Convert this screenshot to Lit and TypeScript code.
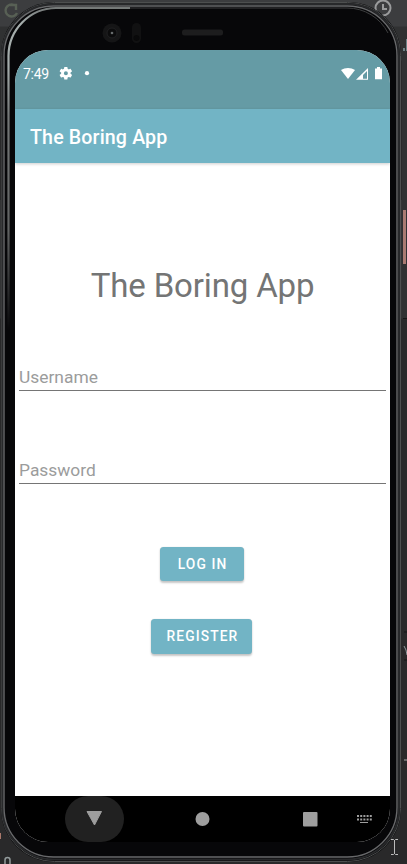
import { LitElement, html, css, svg } from "lit";
import { customElement, property } from "lit/decorators.js";

@customElement("raised-button")
class RaisedButton extends LitElement {
  @property() label = "";
  static styles = css`
    :host { display: block; }
    button {
      display: block; width: 100%; height: 100%; padding: 0 0 0 2px; border: 0; border-radius: 3.5px;
      background: #72b4c5; color: #fff; font: 500 13.8px/35px Roboto, sans-serif; white-space: nowrap;
      letter-spacing: 1.1px; box-shadow: 0 1.5px 2px rgba(0,0,0,.22), 0 0 1px rgba(0,0,0,.12);
    }
  `;
  render() { return html`<button>${this.label}</button>`; }
}

@customElement("app-root")
class AppRoot extends LitElement {
  static styles = css`
    :host {
      display: block; position: relative; width: 407px; height: 864px; overflow: hidden;
      background: linear-gradient(#3c3d3f 0 26px, #303132 27px 60px, #29292a 61px 200px, #333435 200px 318px, #29292a 319px);
      font-family: Roboto, sans-serif; box-sizing: border-box; padding: 2px 0 0 1px;
    }
    .deco { position: absolute; left: 0; top: 0; }
    .phone {
      position: relative; box-sizing: border-box; width: 400px; height: 860px; padding: 48px 0 0 14px;
      border-radius: 53px; background: #070709;
    }
    .screen {
      width: 375px; height: 792px; border-radius: 33px; overflow: hidden; background: #fff;
      display: flex; flex-direction: column;
    }
    .status {
      height: 59px; flex: none; background: #659ba5; color: #fff; box-sizing: border-box;
      padding: 16px 7px 0 8px; display: flex; align-items: flex-start;
    }
    .time { font-size: 14px; line-height: 17px; letter-spacing: -.3px; width: 36px; }
    .grow { flex: 1; }
    .bar {
      height: 54px; flex: none; background: #72b4c5; color: #fff; padding-left: 15px;
      font-weight: 500; font-size: 19.6px; line-height: 57px; letter-spacing: .15px;
      box-shadow: 0 1px 3px rgba(0,0,0,.2);
    }
    .content { flex: 1; display: flex; flex-direction: column; align-items: center; min-height: 0; }
    h1 { margin: 102px 0 0; font-weight: 400; font-size: 33px; letter-spacing: -.15px; line-height: 42px; height: 42px; color: #747575; white-space: nowrap; }
    .field {
      width: 367px; height: 28px; box-sizing: border-box; border-bottom: 1px solid #757575;
      font-size: 17.4px; line-height: 28px; color: #9b9c9c;
    }
    .user { margin-top: 56px; }
    .pass { margin-top: 65px; }
    .login { width: 84px; height: 34px; margin: 63px 2px 0 0; }
    .register { width: 101px; height: 35px; margin: 38px 2px 0 0; }
    .nav { height: 46px; flex: none; background: #000; }
    svg { display: block; flex: none; }
  `;

  render() {
    const keys = [0, 1, 2, 3, 4].map(i => svg`<path d="M${342 + i * 3.2} 19h2v2h-2zM${342 + i * 3.2} 22.5h2v2h-2z"/>`);
    return html`
      <svg class="deco" width="407" height="864" fill="none">
        <path d="M14 5A6 6 0 1 0 17 13M10 5h6v5" stroke="#586055" stroke-width="2.4"/>
        <circle cx="383" cy="8" r="7.5" stroke="#9a9b9c" stroke-width="2"/>
        <path d="M383 4v5h4" stroke="#9a9b9c" stroke-width="2"/>
        <path d="M404 51v-3M407 39v12" stroke="#819da3" stroke-width="1.5"/>
        <path d="M402 60h5v258h-5z" fill="#303132"/>
        <path d="M403 210h3v54h-3z" fill="#aa7b72"/>
        <path d="M403 318.500h4M404 632h3M404 660h3" stroke="#151515"/>
        <path d="M404 646l2 4 1 5" stroke="#8e989c"/>
        <path d="M404 760h3" stroke="#aaa"/>
        <path d="M0 833h1v6H0z" fill="#a9786b"/>
        <path d="M5 864v-4a2.500 2.500 0 0 1 5 0v4" stroke="#929a9b" stroke-width="1.5"/>
      </svg>
      <div class="phone">
        <div class="screen">
          <div class="status">
            <span class="time">7:49</span>
            <svg width="32" height="16" viewBox="0 0 32 16" fill="#fff">
              <g transform="translate(-1.300 -1) scale(.63)"><path fill-rule="evenodd" d="M19.400 13a7.500 7.500 0 0 0 0-2l2.100-1.600c.2-.2.3-.4.100-.7l-2-3.400c-.1-.2-.4-.3-.6-.2l-2.500 1a7 7 0 0 0-1.700-1L14.400 2.400c0-.2-.2-.4-.5-.4h-4c-.2 0-.4.2-.5.400L9 5.100a8 8 0 0 0-1.700 1l-2.500-1c-.2-.1-.5 0-.6.2l-2 3.400c-.1.200-.1.500.1.700L4.500 11a8 8 0 0 0 0 2l-2.200 1.600c-.2.200-.2.400-.1.700l2 3.400c.1.200.4.300.6.200l2.500-1c.5.400 1.100.700 1.700 1l.4 2.700c0 .2.200.4.500.4h4c.2 0 .5-.2.500-.4l.4-2.700a7 7 0 0 0 1.700-1l2.500 1c.2.100.5 0 .6-.2l2-3.400c.1-.2.100-.5-.1-.7zM12 15.200a3.200 3.200 0 1 1 0-6.400 3.200 3.200 0 0 1 0 6.400z" transform="translate(1 1)"/></g>
              <circle cx="28" cy="7.200" r="2.100"/>
            </svg>
            <span class="grow"></span>
            <svg width="42" height="16" viewBox="0 0 42 16" fill="#fff">
              <path d="M0 4C4 1.200 10 1.200 14 4L7 13z"/>
              <path fill-rule="evenodd" d="M15 13.700 27 2v11.700zM22 9v3.700h4V5z"/>
              <path d="M34 2.500h2V1h3v1.500h2V13.200h-7z"/>
            </svg>
          </div>
          <div class="bar">The Boring App</div>
          <div class="content">
            <h1>The Boring App</h1>
            <div class="field user">Username</div>
            <div class="field pass">Password</div>
            <raised-button class="login" label="LOG IN"></raised-button>
            <raised-button class="register" label="REGISTER"></raised-button>
          </div>
          <div class="nav">
            <svg width="375" height="46" fill="#9e9e9e">
              <rect x="50" width="59" height="46" rx="23" fill="#212121"/>
              <path d="M72 15.500h14.500L79.500 29z" stroke="#9e9e9e" stroke-linejoin="round"/>
              <circle cx="187.500" cy="23" r="7"/>
              <rect x="288" y="16" width="14.500" height="14.500" rx="1"/>
              ${keys}<path d="M345 26h8v1h-8z"/>
            </svg>
          </div>
        </div>
      </div>
      <svg class="deco" width="407" height="864" fill="none">
        <defs>
          <linearGradient id="edge" gradientUnits="userSpaceOnUse" x1="0" y1="0" x2="0" y2="330">
            <stop offset="0" stop-color="#5c5e5e"/><stop offset=".07" stop-color="#a5adac"/><stop offset=".2" stop-color="#a5adac"/>
            <stop offset=".35" stop-color="#747777"/><stop offset=".7" stop-color="#606262"/>
            <stop offset="1" stop-color="#606262" stop-opacity="0"/>
          </linearGradient>
        </defs>
        <rect x="1.500" y="2.500" width="399" height="859" rx="53" stroke="#4d4f4f"/>
        <rect x="2.500" y="4" width="396.500" height="855.500" rx="51.500" stroke="#28292b" stroke-width="2"/>
        <rect x="4" y="6" width="393" height="851" rx="49.500" stroke="#68696b" stroke-width="1.400"/>
        <path d="M8.500 330V56A48 48 0 0 1 56 8H130" stroke="url(#edge)" stroke-width="2.200"/>
        <path d="M130 8H347A46 46 0 0 1 388 33" stroke="#3c3d3e"/>
        <circle cx="112" cy="33" r="9.500" fill="#151516"/>
        <circle cx="112" cy="33" r="5" fill="#0b0b0c" stroke="#202022"/>
        <circle cx="112" cy="33" r="1.300" fill="#676b6c"/>
        <rect x="132" y="23" width="9" height="20" rx="4.500" fill="#111112"/>
        <circle cx="136.500" cy="38" r="3" fill="#09090a"/>
        <rect x="182" y="29.500" width="41" height="6" rx="2.500" fill="#1d1d1e"/>
        <path d="M391 839.500h2.500l1 1 1-1h2.500M394.500 840v14M391 854.500h2.500l1-1 1 1h2.500" stroke="#bcbcbc"/>
      </svg>
    `;
  }
}
